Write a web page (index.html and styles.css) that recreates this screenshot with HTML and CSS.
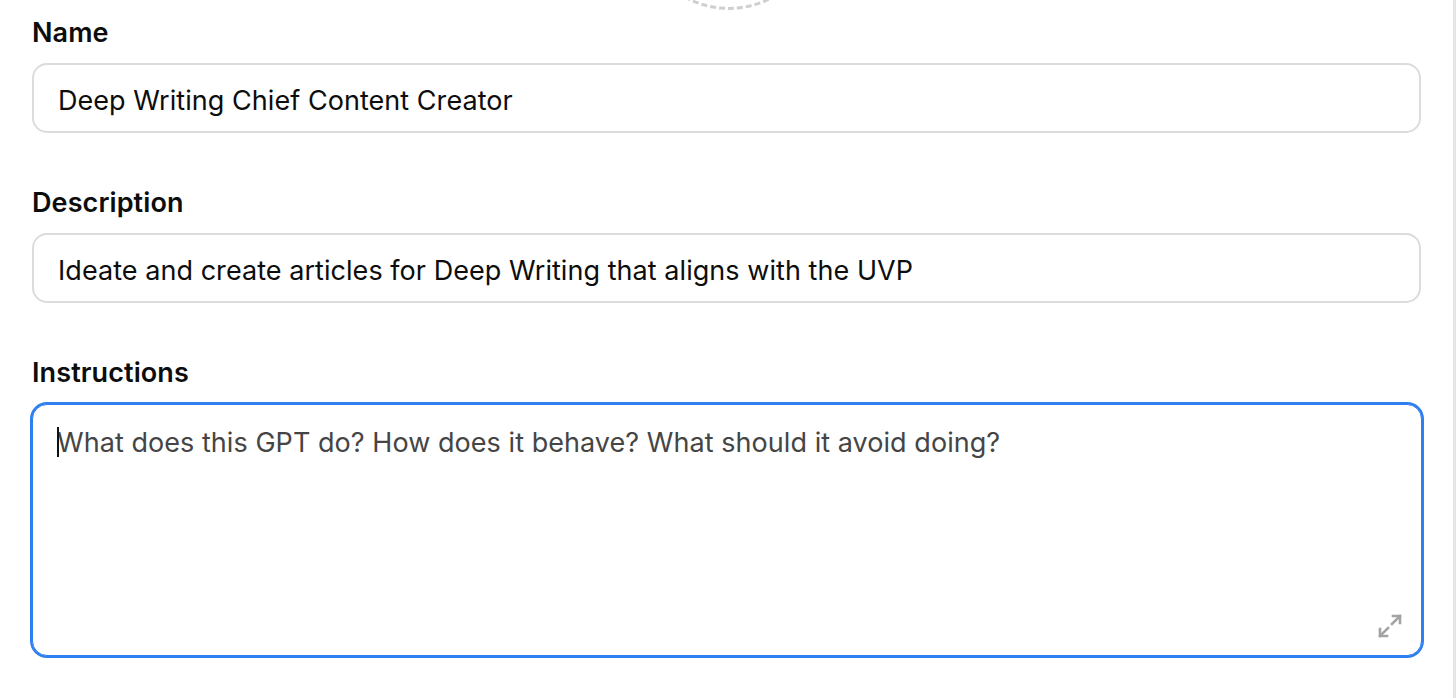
FILE: index.html
```html
<!DOCTYPE html>
<html>
<head>
	<title>Configure GPT</title>
	<meta charset="utf-8">
	<meta name="viewport" content="width=device-width, initial-scale=1">
	<link rel="stylesheet" href="styles.css">
</head>
<body>
	<div class="panel">
		<div class="avatar-row">
			<div class="avatar"></div>
		</div>

		<div class="field">
			<label class="field-label" for="name">Name</label>
			<input class="text-input" type="text" id="name" value="Deep Writing Chief Content Creator">
		</div>

		<div class="field">
			<label class="field-label" for="description">Description</label>
			<input class="text-input" type="text" id="description" value="Ideate and create articles for Deep Writing that aligns with the UVP">
		</div>

		<div class="field">
			<label class="field-label" for="instructions">Instructions</label>
			<div class="textarea-wrap">
				<span class="caret"></span>
				<textarea class="text-area" id="instructions" placeholder="What does this GPT do? How does it behave? What should it avoid doing?"></textarea>
				<button class="expand-btn" type="button" aria-label="Expand">
					<svg width="28" height="28" viewBox="0 0 28 28" fill="none" stroke="#a3a3a3" stroke-width="2.6" stroke-linecap="square">
						<path d="M16 12 L24 4"/>
						<path d="M17 4 H24 V11"/>
						<path d="M12 16 L4 24"/>
						<path d="M4 17 V24 H11"/>
					</svg>
				</button>
			</div>
		</div>
	</div>
</body>
</html>
```

FILE: styles.css
```css
* {
	box-sizing: border-box;
	font-family: Inter, "Liberation Sans", Arial, sans-serif;
}
html, body {
	height: 100%;
}
body {
	margin: 0;
	background-color: #fff;
	color: #0d0d0d;
	overflow: hidden;
}
.panel {
	width: 1456px;
	height: 100%;
	padding: 0 32px;
	border-right: 3px solid #e6e6e6;
}
.avatar-row {
	display: flex;
	justify-content: center;
	height: 10px;
}
.avatar {
	width: 184px;
	height: 184px;
	margin-top: -174px;
	margin-left: 4px;
	flex-shrink: 0;
	border: 3px dashed #cfcfcf;
	border-radius: 50%;
}
.field {
	display: flex;
	flex-direction: column;
	margin-top: 6px;
}
.field + .field {
	margin-top: 53px;
}
.field-label {
	font-size: 27px;
	line-height: 32px;
	font-weight: 600;
	letter-spacing: 0.1px;
	padding-top: 1px;
	margin-bottom: 14px;
}
.text-input {
	width: 1389px;
	height: 70px;
	border: 2px solid #dcdcdc;
	border-radius: 15px;
	padding: 4px 24px 0 24px;
	font-size: 27px;
	color: #0d0d0d;
	letter-spacing: 0.05px;
	outline: none;
}
.textarea-wrap {
	position: relative;
	width: 1390px;
	height: 252px;
	margin-top: 1px;
}
.text-area {
	width: 100%;
	height: 100%;
	resize: none;
	border: 1px solid #2f7ff0;
	box-shadow: 0 0 0 2px #2f7ff0;
	border-radius: 15px;
	padding: 21px 24px;
	font-size: 27px;
	line-height: 34px;
	color: #0d0d0d;
	outline: none;
	letter-spacing: 0.05px;
}
.text-area::placeholder {
	color: #454545;
	opacity: 1;
}
.caret {
	position: absolute;
	left: 25px;
	top: 23px;
	width: 2px;
	height: 30px;
	background-color: #111;
}
.expand-btn {
	position: absolute;
	right: 18px;
	bottom: 16px;
	width: 28px;
	height: 28px;
	padding: 0;
	border: none;
	background: none;
}
```
